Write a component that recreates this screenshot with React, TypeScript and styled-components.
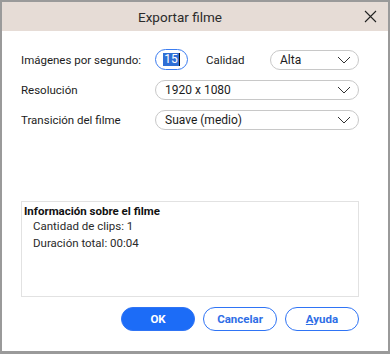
import React from 'react';
import styled, { createGlobalStyle } from 'styled-components';

const GlobalStyle = createGlobalStyle`
  html, body {
    margin: 0;
    padding: 0;
    background: #ffffff;
  }
  body {
    font-family: Roboto, 'Noto Sans', sans-serif;
  }
`;

const Dialog = styled.div`
  width: 390px;
  height: 354px;
  box-sizing: border-box;
  border: 2px solid #9a9a9a;
  border-bottom-width: 3px;
  background: #ffffff;
  display: flex;
  flex-direction: column;
`;

const TitleBar = styled.div`
  height: 29px;
  background: #e6dcd6;
  position: relative;
  display: flex;
  align-items: center;
  justify-content: center;
  padding-right: 30px;
  font-size: 13.5px;
  color: #2b2b2b;
`;

const CloseButton = styled.button`
  position: absolute;
  right: 11px;
  top: 7px;
  width: 14px;
  height: 14px;
  padding: 0;
  border: none;
  background: none;
  display: flex;
  align-items: center;
  justify-content: center;
`;

const Body = styled.div`
  flex: 1;
  display: flex;
  flex-direction: column;
  padding: 18px 29px 0 19px;
`;

const Row = styled.div`
  display: flex;
  align-items: center;
  height: 21px;
  margin-bottom: 9px;
`;

const Label = styled.div<{ $width?: number }>`
  width: ${p => (p.$width ? `${p.$width}px` : 'auto')};
  font-size: 11.5px;
  color: #1c1c1c;
  flex-shrink: 0;
`;

const NumberPill = styled.div`
  width: 33px;
  height: 21px;
  border: 1.5px solid #3b7cf0;
  border-radius: 11px;
  display: flex;
  align-items: center;
  justify-content: center;
  font-size: 12px;
  box-sizing: border-box;
`;

const Selected = styled.span`
  background: #2f6fd6;
  color: #ffffff;
  padding: 0 1px;
  line-height: 13px;
  border-right: 1px solid #111;
`;

const QualityLabel = styled(Label)`
  margin-left: 18px;
  width: 64px;
`;

const Select = styled.div<{ $width?: number }>`
  width: ${p => (p.$width ? `${p.$width}px` : 'auto')};
  flex: ${p => (p.$width ? '0 0 auto' : '1')};
  height: 20px;
  box-sizing: border-box;
  border: 1px solid #c8c8c8;
  border-radius: 10px;
  display: flex;
  align-items: center;
  justify-content: space-between;
  padding: 0 7px 0 9px;
  font-size: 12px;
  color: #1c1c1c;
`;

const Spacer = styled.div`
  height: 62px;
`;

const InfoBox = styled.div`
  height: 96px;
  border: 1px solid #e2e2e2;
  box-sizing: border-box;
  padding: 2px 2px;
  font-size: 11.5px;
  color: #1c1c1c;
`;

const InfoTitle = styled.div`
  font-weight: 700;
  color: #111;
  line-height: 14px;
`;

const InfoLine = styled.div`
  padding-left: 9px;
  line-height: 17px;
  color: #2a2a2a;
`;

const Footer = styled.div`
  display: flex;
  justify-content: flex-end;
  gap: 8px;
  margin-top: 10px;
`;

const Button = styled.button<{ $primary?: boolean }>`
  width: 74px;
  height: 24px;
  border-radius: 12px;
  border: 1px solid #2f74f5;
  background: ${p => (p.$primary ? '#1c6cf7' : '#ffffff')};
  color: ${p => (p.$primary ? '#ffffff' : '#2f6ee6')};
  font-family: Roboto, sans-serif;
  font-weight: 700;
  font-size: 11.5px;
  padding: 0;
  cursor: pointer;
  u {
    text-decoration-thickness: 1px;
  }
`;

const Chevron = () => (
  <svg width="14" height="8" viewBox="0 0 14 8">
    <path d="M1 1 L7 7 L13 1" fill="none" stroke="#333" strokeWidth="1" />
  </svg>
);

const App: React.FC = () => {
  return (
    <>
      <GlobalStyle />
      <Dialog>
        <TitleBar>
          Exportar filme
          <CloseButton aria-label="Cerrar">
            <svg width="13" height="13" viewBox="0 0 13 13">
              <path d="M1 1 L12 12 M12 1 L1 12" stroke="#222" strokeWidth="1.1" />
            </svg>
          </CloseButton>
        </TitleBar>
        <Body>
          <Row>
            <Label $width={134}>Imágenes por segundo:</Label>
            <NumberPill>
              <Selected>15</Selected>
            </NumberPill>
            <QualityLabel>Calidad</QualityLabel>
            <Select $width={89}>
              Alta
              <Chevron />
            </Select>
          </Row>
          <Row>
            <Label $width={134}>Resolución</Label>
            <Select>
              1920 x 1080
              <Chevron />
            </Select>
          </Row>
          <Row>
            <Label $width={134}>Transición del filme</Label>
            <Select>
              Suave (medio)
              <Chevron />
            </Select>
          </Row>
          <Spacer />
          <InfoBox>
            <InfoTitle>Información sobre el filme</InfoTitle>
            <InfoLine>Cantidad de clips: 1</InfoLine>
            <InfoLine>Duración total: 00:04</InfoLine>
          </InfoBox>
          <Footer>
            <Button $primary>OK</Button>
            <Button>Cancelar</Button>
            <Button>
              <u>A</u>yuda
            </Button>
          </Footer>
        </Body>
      </Dialog>
    </>
  );
};

export default App;
